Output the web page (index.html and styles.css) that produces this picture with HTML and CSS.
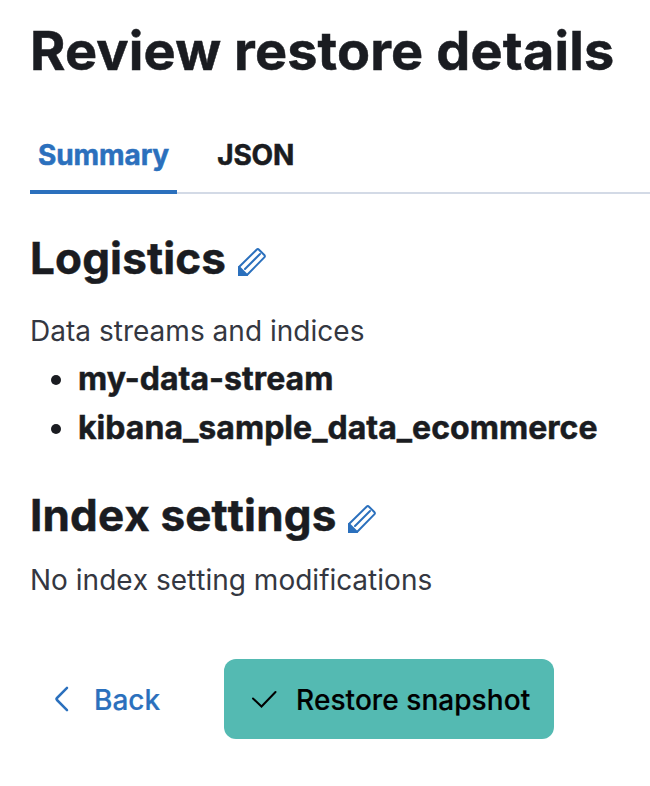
FILE: index.html
```
<!DOCTYPE html>
<html lang="en">
<head>
<meta charset="utf-8">
<title>Review restore details</title>
<link rel="stylesheet" href="styles.css">
</head>
<body>
<main class="page">
  <h1 class="title">Review restore details</h1>
  <nav class="tabs">
    <span class="tab tab-active">Summary</span>
    <span class="tab">JSON</span>
  </nav>
  <h2 class="section">Logistics
    <svg class="pencil" viewBox="0 0 28 28"><path d="M1 19L18.600 1.700Q19.800.500 21 1.700L26.300 7Q27.500 8.200 26.300 9.400L9 27M7 21L22 6"/><path class="tip" d="M0 18.600L1.500 18L10 26.500L9.400 28H0z"/></svg>
  </h2>
  <p class="label">Data streams and indices</p>
  <ul class="list">
    <li>my-data-stream</li>
    <li>kibana_sample_data_ecommerce</li>
  </ul>
  <h2 class="section section-second">Index settings
    <svg class="pencil" viewBox="0 0 28 28"><path d="M1 19L18.600 1.700Q19.800.500 21 1.700L26.300 7Q27.500 8.200 26.300 9.400L9 27M7 21L22 6"/><path class="tip" d="M0 18.600L1.500 18L10 26.500L9.400 28H0z"/></svg>
  </h2>
  <p class="label label-second">No index setting modifications</p>
  <div class="actions">
    <button class="back"><svg class="chevron" viewBox="0 0 16 28"><path d="M13 2.800L3 13Q2 14 3 15L13 25.200"/></svg>Back</button>
    <button class="restore"><svg class="check" viewBox="0 0 26 20"><path d="M2 9.500l8.500 8L24.500 3"/></svg>Restore snapshot</button>
  </div>
</main>
</body>
</html>
```
FILE: styles.css
```
* { box-sizing: border-box; }
body { margin: 0; background: #fff; color: #1a1c21; font-family: Inter, sans-serif; }
.page { padding: 11px 0 0 30px; }
.title, .tab, .section, .list { -webkit-text-stroke: 0.5px currentColor; }
.title { margin: 0; font-size: 54px; line-height: 80px; font-weight: 700; letter-spacing: 0.14px; white-space: nowrap; }
.tabs { display: flex; gap: 32px; height: 76px; margin-top: 27px; border-bottom: 2px solid #d3dae6; }
.tab { height: 76px; padding: 0 8px; font-size: 28px; font-weight: 700; line-height: 74px; letter-spacing: -0.1px; }
.tab-active { color: #2b70bd; border-bottom: 4px solid #2b70bd; }
.section { display: flex; align-items: center; gap: 12px; margin: 39px 0 0; font-size: 44px; line-height: 50px; font-weight: 700; letter-spacing: 0.14px; }
.pencil { width: 28px; height: 28px; margin-top: 8px; fill: none; stroke: #2b70bd; stroke-width: 2; stroke-linecap: round; }
.pencil .tip { fill: #2b70bd; stroke: none; }
.label { margin: 26px 0 0; color: #343741; font-size: 28px; line-height: 44px; letter-spacing: 0.02px; }
.list { margin: 0; padding: 1px 0 0 48px; font-size: 32px; font-weight: 700; line-height: 49px; letter-spacing: 0.04px; }
.section-second { margin-top: 38px; font-kerning: none; }
.label-second { margin-top: 18px; font-kerning: none; }
.actions { display: flex; gap: 40px; margin-top: 57px; }
button { display: flex; align-items: center; border: 0; padding: 2px 24px 0; height: 80px; font: 500 28px Inter, sans-serif; white-space: nowrap; -webkit-text-stroke: 0.2px currentColor; }
.back { background: none; color: #2b70bd; }
.restore { background: #54bab2; border-radius: 12px; color: #000; letter-spacing: 0.06px; }
.chevron { width: 16px; height: 28px; margin: -2px 24px 0 0; fill: none; stroke: currentColor; stroke-width: 2.5; stroke-linecap: round; }
.check { width: 26px; height: 20px; margin: -2px 19px 0 3px; fill: none; stroke: currentColor; stroke-width: 2; stroke-linecap: round; }
```
